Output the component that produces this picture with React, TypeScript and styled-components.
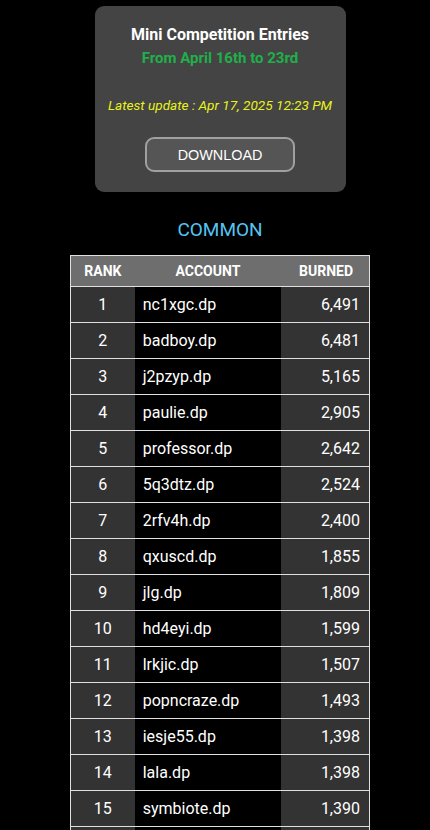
import React from "react";
import styled, { createGlobalStyle } from "styled-components";

const Global = createGlobalStyle`
  html, body { margin: 0; padding: 0; background: #000; }
  body { font-family: Roboto, "Noto Sans", sans-serif; color: #fff; }
`;

const Page = styled.div`
  width: 430px;
  box-sizing: border-box;
  padding: 6px 0 0 10px;
  display: flex;
  flex-direction: column;
  align-items: center;
`;

const Card = styled.div`
  width: 251px;
  height: 186px;
  box-sizing: border-box;
  background: #444444;
  border-radius: 9px;
  display: flex;
  flex-direction: column;
  align-items: center;
  padding-top: 19px;
`;

const Title = styled.div`
  font-size: 16px;
  font-weight: 700;
  color: #fff;
  line-height: 20px;
`;

const Dates = styled.div`
  font-size: 15px;
  font-weight: 700;
  color: #1fb04a;
  line-height: 20px;
  margin-top: 3px;
`;

const Updated = styled.div`
  font-size: 13.6px;
  font-style: italic;
  color: #e9f21a;
  line-height: 18px;
  margin-top: 28px;
`;

const Button = styled.button`
  margin-top: 23px;
  width: 150px;
  height: 35px;
  background: #555555;
  border: 2px solid #a0a0a0;
  border-radius: 9px;
  color: #fff;
  font-family: "Liberation Sans", Arial, sans-serif;
  font-size: 14.4px;
  padding: 0;
`;

const Heading = styled.div`
  margin-top: 26px;
  font-size: 19px;
  color: #55c4f2;
  line-height: 24px;
`;

const Table = styled.table`
  margin-top: 13px;
  width: 300px;
  border-collapse: collapse;
  border: 1px solid #e0e0e0;
  font-family: Roboto, sans-serif;
`;

const HeadCell = styled.th<{ $align: string }>`
  background: #6e6e6e;
  height: 30px;
  padding: 0 ${(p) => (p.$align === "right" ? "16px" : "0")} 0 0;
  font-size: 14px;
  font-weight: 700;
  color: #fff;
  text-align: ${(p) => p.$align};
  border-bottom: 1px solid #e0e0e0;
`;

const Row = styled.tr`
  border-bottom: 1px solid #e0e0e0;
`;

const Cell = styled.td<{ $bg: string; $align: string; $pad: string }>`
  background: ${(p) => p.$bg};
  height: 36px;
  padding: ${(p) => p.$pad};
  box-sizing: border-box;
  font-size: 16px;
  color: #fff;
  text-align: ${(p) => p.$align};
`;

const rows: [string, string][] = [
  ["nc1xgc.dp", "6,491"],
  ["badboy.dp", "6,481"],
  ["j2pzyp.dp", "5,165"],
  ["paulie.dp", "2,905"],
  ["professor.dp", "2,642"],
  ["5q3dtz.dp", "2,524"],
  ["2rfv4h.dp", "2,400"],
  ["qxuscd.dp", "1,855"],
  ["jlg.dp", "1,809"],
  ["hd4eyi.dp", "1,599"],
  ["lrkjic.dp", "1,507"],
  ["popncraze.dp", "1,493"],
  ["iesje55.dp", "1,398"],
  ["lala.dp", "1,398"],
  ["symbiote.dp", "1,390"],
];

export default function App() {
  return (
    <>
      <Global />
      <Page>
        <Card>
          <Title>Mini Competition Entries</Title>
          <Dates>From April 16th to 23rd</Dates>
          <Updated>Latest update : Apr 17, 2025 12:23 PM</Updated>
          <Button>DOWNLOAD</Button>
        </Card>
        <Heading>COMMON</Heading>
        <Table>
          <colgroup>
            <col style={{ width: 64 }} />
            <col style={{ width: 146 }} />
            <col style={{ width: 88 }} />
          </colgroup>
          <thead>
            <tr>
              <HeadCell $align="center">RANK</HeadCell>
              <HeadCell $align="center">ACCOUNT</HeadCell>
              <HeadCell $align="right">BURNED</HeadCell>
            </tr>
          </thead>
          <tbody>
            {rows.map(([name, burned], i) => (
              <Row key={name}>
                <Cell $bg="#333333" $align="center" $pad="0">{i + 1}</Cell>
                <Cell $bg="#000000" $align="left" $pad="0 0 0 8px">{name}</Cell>
                <Cell $bg="#333333" $align="right" $pad="0 9px 0 0">{burned}</Cell>
              </Row>
            ))}
            <Row>
              <Cell $bg="#333333" $align="center" $pad="0" />
              <Cell $bg="#000000" $align="left" $pad="0 0 0 8px" />
              <Cell $bg="#333333" $align="right" $pad="0 9px 0 0" />
            </Row>
          </tbody>
        </Table>
      </Page>
    </>
  );
}
